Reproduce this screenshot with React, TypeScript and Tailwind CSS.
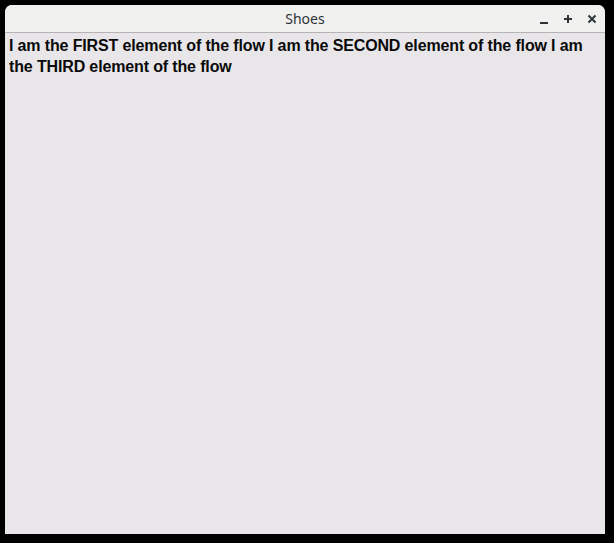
export default function App() {
  return (
    <div className="w-[614px] h-[543px] bg-black pt-[5px] pl-[5px]">
      <div className="w-[600px] h-[529px] flex flex-col rounded-t-[7px] overflow-hidden bg-[#e8e6e9]">
        <div className="h-[28px] bg-[#f0f0ef] relative flex items-center justify-center border-b border-[#b5b3b3]">
          <span className="text-[14px] text-[#2e3436]" style={{ fontFamily: '"Noto Sans", sans-serif' }}>Shoes</span>
          <div className="absolute right-[6px] top-0 h-full flex items-center gap-[10px] text-[#2e3436]">
            <svg width="14" height="14" viewBox="0 0 14 14"><rect x="3" y="10" width="8" height="2" fill="#2e3436" /></svg>
            <svg width="14" height="14" viewBox="0 0 14 14"><rect x="3" y="6" width="8" height="2" fill="#2e3436" /><rect x="6" y="3" width="2" height="8" fill="#2e3436" /></svg>
            <svg width="14" height="14" viewBox="0 0 14 14"><path d="M3.5 3.5 L10.5 10.5 M10.5 3.5 L3.5 10.5" stroke="#2e3436" strokeWidth="2" /></svg>
          </div>
        </div>
        <div className="px-[4px] pt-[2px]">
          <p className="text-[16px] leading-[21px] font-bold text-[#0a0a0a] tracking-[-0.14px]" style={{ fontFamily: '"Liberation Sans", Arial, sans-serif' }}>
            I am the FIRST element of the flow I am the SECOND element of the flow I am the THIRD element of the flow
          </p>
        </div>
      </div>
    </div>
  );
}
